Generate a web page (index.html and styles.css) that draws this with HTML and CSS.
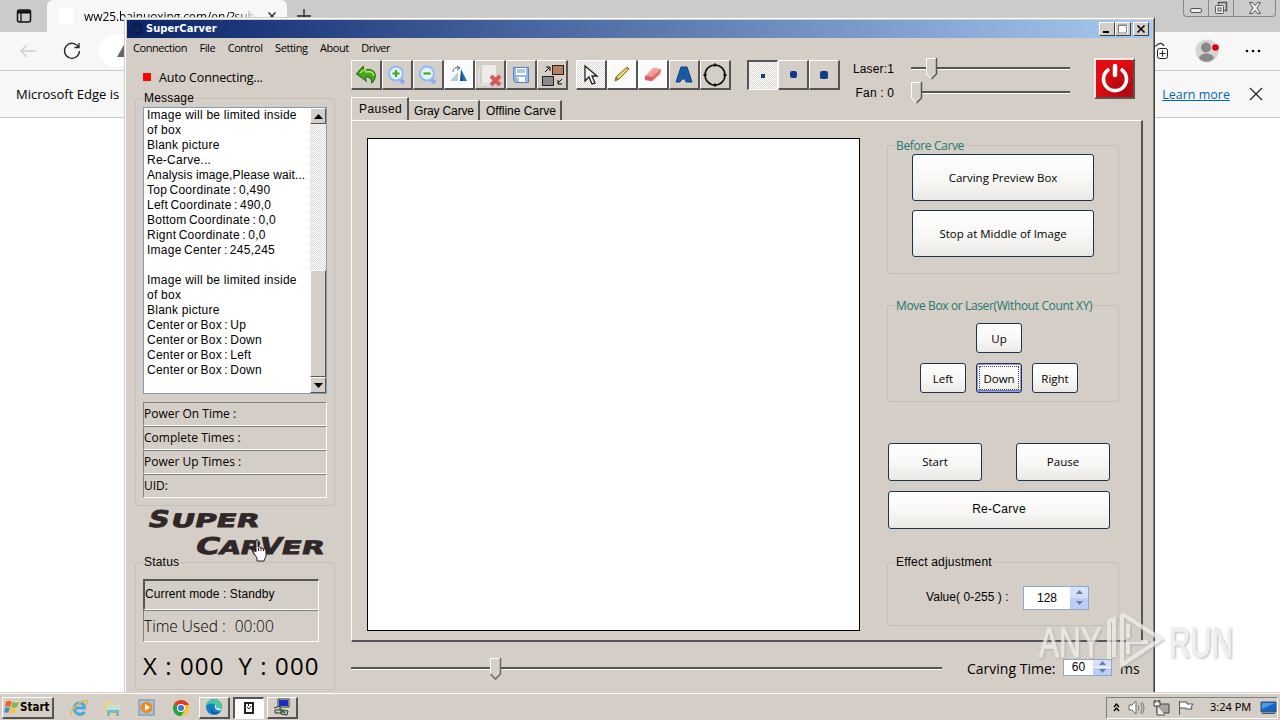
FILE: index.html
```html
<!DOCTYPE html>
<html lang="en">
<head>
    <meta charset="UTF-8">
    <title>SuperCarver</title>
    <link rel="stylesheet" href="styles.css">
</head>
<body>
    <div class="browser">
        <div class="tab-strip">
            <svg class="tab-menu" width="16" height="16" viewBox="0 0 16 16"><rect x="1.5" y="2" width="13" height="12" rx="2" fill="none" stroke="#111" stroke-width="1.5"/><path d="M2 4h12" stroke="#111" stroke-width="3"/><path d="M5 4v10" stroke="#111" stroke-width="1.3"/></svg>
            <div class="browser-tab">
                <span class="favicon"></span>
                <span class="tab-title">ww25.bainuoxing.com/en/?subid</span>
                <svg width="10" height="10" viewBox="0 0 10 10"><path d="M1.5 1.5l7 7m0-7l-7 7" stroke="#222" stroke-width="1.4"/></svg>
            </div>
            <svg class="new-tab" width="16" height="16" viewBox="0 0 16 16"><path d="M8 1v14M1 8h14" stroke="#222" stroke-width="1.3"/></svg>
            <div class="browser-controls">
                <span><svg width="14" height="14" viewBox="0 0 14 14"><rect x="1.5" y="7.5" width="11" height="4" rx="1.5" fill="#eee" stroke="#555"/></svg></span>
                <span><svg width="14" height="14" viewBox="0 0 14 14"><path d="M4.500 3.500v-2h8v8h-2" fill="none" stroke="#555" stroke-width="1.500"/><rect x="1.500" y="4.500" width="8" height="8" rx="1" fill="#eee" stroke="#555"/><rect x="4" y="7" width="3" height="3" fill="none" stroke="#555"/></svg></span>
                <span class="close"><svg width="14" height="12" viewBox="0 0 14 12"><path d="M1.500.5h3L7 3.500 9.500.5h3L9 6l3.500 5.500h-3L7 8.500l-2.500 3h-3L5 6z" fill="#eee" stroke="#555"/></svg></span>
            </div>
        </div>
        <div class="browser-toolbar">
            <svg width="18" height="16" viewBox="0 0 18 16"><path d="M17 8H2m6-6L2 8l6 6" fill="none" stroke="#d0d0d0" stroke-width="1.3"/></svg>
            <svg width="18" height="18" viewBox="0 0 18 18"><path d="M15.500 5A7.500 7.500 0 1 0 16.500 9M16 1v4.500h-4.500" fill="none" stroke="#222" stroke-width="1.300"/></svg>
            <div class="address"><svg width="18" height="16" viewBox="0 0 18 16"><path d="M9 1l8 14H1z" fill="#666"/></svg></div>
            <svg width="18" height="18" viewBox="0 0 18 18"><path d="M1 4h4c3-4 7-3 8 0M1 13h3" fill="none" stroke="#222" stroke-width="1.200"/><rect x="6.500" y="6.500" width="10" height="10" rx="2" fill="#f7f7f7" stroke="#222"/><path d="M11.500 8.500v6m-3-3h6" stroke="#222"/></svg>
            <svg class="avatar" width="24" height="24" viewBox="0 0 24 24"><circle cx="12" cy="12" r="11.500" fill="#d5d5d5"/><circle cx="11" cy="8.500" r="5" fill="#888"/><path d="M4 19c1-6 14-6 15 0-4 5-11 5-15 0z" fill="#888"/><circle cx="20.500" cy="8.500" r="3.300" fill="#d9001b"/></svg>
            <svg width="16" height="4" viewBox="0 0 16 4"><circle cx="2" cy="2" r="1.300"/><circle cx="8" cy="2" r="1.300"/><circle cx="14" cy="2" r="1.300"/></svg>
        </div>
        <div class="infobar">
            <span class="info-text">Microsoft Edge is</span>
            <span class="learn-more">Learn more</span>
            <svg width="14" height="14" viewBox="0 0 14 14"><path d="M1 1l12 12m0-12L1 13" stroke="#222" stroke-width="1.200"/></svg>
        </div>
    </div>

    <div class="window">
        <div class="title-bar">
            <svg width="9" height="12" viewBox="0 0 9 12"><rect x=".5" y=".5" width="8" height="11" fill="#151b3c"/><path d="M2 3h5v6H2z" fill="#0d2560"/></svg>
            <span class="title">SuperCarver</span>
            <div class="controls">
                <button><svg width="12" height="10" viewBox="0 0 12 10"><path d="M2 7h6v2H2z"/></svg></button>
                <button><svg width="12" height="10" viewBox="0 0 12 10"><path d="M2 1h9v9H2z" fill="#fff"/><path d="M1.500 1h8v8h-8zM1 1.500h9" fill="none" stroke="#808080"/></svg></button>
                <button class="close"><svg width="12" height="10" viewBox="0 0 12 10"><path d="M2.500 1.500l7 7m0-7l-7 7" stroke="#000" stroke-width="1.600"/></svg></button>
            </div>
        </div>
        <div class="menu-bar">
            <span>Connection</span>
            <span>File</span>
            <span>Control</span>
            <span>Setting</span>
            <span>About</span>
            <span>Driver</span>
        </div>

        <div class="content">
            <div class="sidebar">
                <div class="connecting"><i></i><span>Auto Connecting...</span></div>
                <fieldset class="message">
                    <legend>Message</legend>
                    <div class="log">
<pre class="log-text">Image will be limited inside
of box
Blank picture
Re-Carve...
<span class="analysis">Analysis image,Please wait...</span>
<span class="pair">Top Coordinate : 0,490
Left Coordinate : 490,0
Bottom Coordinate : 0,0
Rignt Coordinate : 0,0
Image Center : 245,245</span>

Image will be limited inside
of box
Blank picture
<span class="pair">Center or Box : Up
Center or Box : Down
Center or Box : Left
Center or Box : Down</span></pre>
                        <div class="scrollbar">
                            <span class="scroll-btn"><svg width="9" height="5" viewBox="0 0 9 5"><path d="M0 5l4.500-5L9 5z"/></svg></span>
                            <span class="scroll-thumb"></span>
                            <span class="scroll-btn"><svg width="9" height="5" viewBox="0 0 9 5"><path d="M0 0l4.500 5L9 0z"/></svg></span>
                        </div>
                    </div>
                    <div class="info-rows">
                        <div><span>Power On Time :</span></div>
                        <div><span>Complete Times :</span></div>
                        <div><span>Power Up Times :</span></div>
                        <div><span>UID:</span></div>
                    </div>
                </fieldset>
                <svg class="logo" width="200" height="49" viewBox="0 0 200 49">
                    <g transform="skewX(-14)" fill="#302729" stroke="#302729" stroke-width=".8">
                        <text x="17" y="21" font-size="23" textLength="21" lengthAdjust="spacingAndGlyphs">S</text>
                        <text x="40" y="21" font-size="18.500" textLength="88" lengthAdjust="spacingAndGlyphs">UPER</text>
                        <text x="71" y="48" font-size="23" textLength="24" lengthAdjust="spacingAndGlyphs">C</text>
                        <text x="95" y="48" font-size="18.500" textLength="42" lengthAdjust="spacingAndGlyphs">AR</text>
                        <text x="135" y="48" font-size="23" textLength="22" lengthAdjust="spacingAndGlyphs">V</text>
                        <text x="157" y="48" font-size="18.500" textLength="43" lengthAdjust="spacingAndGlyphs">ER</text>
                    </g>
                </svg>
                <fieldset class="status">
                    <legend>Status</legend>
                    <div class="mode">Current mode : Standby</div>
                    <div class="time-used"><span>Time Used :</span><span>00:00</span></div>
                    <div class="coords"><span>X : 000</span><span>Y : 000</span></div>
                </fieldset>
            </div>

            <div class="main">
                <div class="toolbar">
                    <div class="tools">
                        <button><svg width="22" height="22" viewBox="0 0 22 22"><path d="M2 8l8-6v4c7-1 11 3 10 8-1 3-3 5-5 6 1-4-1-7-5-7v4z" fill="#48a51c" stroke="#1f6b12" transform="rotate(-12 11 11)"/><path d="M5 9l5-4 1 3c4-1 7 0 8 4" fill="none" stroke="#b4e361" stroke-width="1.6"/></svg></button>
                        <button><svg width="20" height="20" viewBox="0 0 20 20"><path d="M12 13l5 5" stroke="#8dacf0" stroke-width="4"/><circle cx="9" cy="8.500" r="7" fill="#e1f2ff" stroke="#91bafa" stroke-width="2"/><path d="M9 5v7M5.500 8.500h7" stroke="#4da512" stroke-width="2.200"/></svg></button>
                        <button><svg width="20" height="20" viewBox="0 0 20 20"><path d="M12 13l5 5" stroke="#8dacf0" stroke-width="4"/><circle cx="9" cy="8.500" r="7" fill="#e1f2ff" stroke="#91bafa" stroke-width="2"/><path d="M5.500 8.500h7" stroke="#4da512" stroke-width="2.200"/></svg></button>
                        <button class="white"><svg width="20" height="20" viewBox="0 0 20 20"><path d="M9 7v9H1z" fill="#b9cdd2"/><path d="M12 4v12h6z" fill="#187ab9"/><path d="M12 4l-1 12h3z" fill="#194982"/><path d="M4 7c0-4 3-5 6-4M8 1l3 2-3 2" fill="none" stroke="#386393"/></svg></button>
                        <button><svg width="26" height="24" viewBox="0 0 26 24"><path d="M5 2h14v18c-5 2-10-1-14 1z" fill="#ececec"/><path d="M2 5v17h14" fill="none" stroke="#dedede" stroke-width="2"/><path d="M14 13l9 9m0-9l-9 9" stroke="#d95758" stroke-width="4"/></svg></button>
                        <button><svg width="18" height="18" viewBox="0 0 18 18"><path d="M1.500 1.500h15v15h-13l-2-2z" fill="#92b9e5" stroke="#5585c4"/><path d="M4 2h10v7H4zM5 11h8v5H5z" fill="#fff"/><path d="M5 4h8M5 6h8M6 12v4" stroke="#668db9"/></svg></button>
                        <button><svg width="24" height="24" viewBox="0 0 24 24"><rect x="12.500" y="2.500" width="11" height="9" fill="#b5825d" stroke="#222"/><rect x="2.500" y="13.500" width="11" height="9" fill="#8b8b8b" stroke="#222"/><path d="M5 9l4-4M6 4h4v4M22 16l-4 4m4 1h-4v-4" fill="none" stroke="#000"/></svg></button>
                    </div>
                    <div class="tools">
                        <button class="pattern"><svg width="18" height="22" viewBox="0 0 18 22"><path d="M3 2v15l4-4 3 7 3-1-3-7h5z" fill="#f8f8f8" stroke="#222" stroke-width="1.300"/></svg></button>
                        <button class="white"><svg width="18" height="18" viewBox="0 0 18 18"><path d="M2 15l1-4L14 1l2 2L6 13z" fill="#eed65e" stroke="#766420"/><path d="M2 15l4-2-3-2z" fill="#8b7b53"/><path d="M13 2l2 2" stroke="#e39474" stroke-width="2"/></svg></button>
                        <button class="white"><svg width="20" height="18" viewBox="0 0 20 18"><path d="M2 10L10 2l8 1-1 5-8 7-7-1z" fill="#f68d8c"/><path d="M2 10l7 1v4l-7-1z" fill="#dd5c64"/><path d="M9 11l9-8-1 5-8 7z" fill="#e46d70"/><path d="M4 9l8-6m-5 7l8-6" stroke="#ffc5bf"/></svg></button>
                        <button><svg width="20" height="18" viewBox="0 0 20 18"><path d="M7 1h6l5 15h-6l-1-3H8l-2 3H2zM10 6l-1 4h2z" fill="#1a5bab" stroke="#16437c" fill-rule="evenodd"/></svg></button>
                        <button><svg width="26" height="26" viewBox="0 0 26 26"><circle cx="13" cy="13" r="10" fill="none" stroke="#111" stroke-width="1.600"/><path d="M13 1.500v3m0 17v3M1.500 13h3m17 0h3" stroke="#111" stroke-width="2"/></svg></button>
                    </div>
                    <div class="tools sizes">
                        <button class="pressed"><i class="dot small"></i></button>
                        <button><i class="dot medium"></i></button>
                        <button><i class="dot large"></i></button>
                    </div>
                    <div class="levels">
                        <span>Laser:1</span>
                        <div class="slider"><svg class="laser-thumb" width="12" height="22" viewBox="0 0 12 22"><path d="M.5.500h10V16l-5 5-5-5z" fill="#d6cfc7" stroke="#fff"/><path d="M10.500 0v16l-5 5" fill="none" stroke="#555" stroke-width="1.500"/></svg></div>
                        <span>Fan : 0</span>
                        <div class="slider"><svg width="12" height="22" viewBox="0 0 12 22"><path d="M.5.500h10V16l-5 5-5-5z" fill="#d6cfc7" stroke="#fff"/><path d="M10.500 0v16l-5 5" fill="none" stroke="#555" stroke-width="1.500"/></svg></div>
                    </div>
                    <button class="power"><svg width="30" height="32" viewBox="0 0 30 32"><path d="M8 7a11.500 11.500 0 1 0 14 0" fill="none" stroke="#fff" stroke-width="3.600" stroke-linecap="round"/><path d="M15 3v9" stroke="#fff" stroke-width="4.500" stroke-linecap="round"/></svg></button>
                </div>

                <div class="tabs">
                    <div class="tab active"><span>Paused</span></div>
                    <div class="tab gray"><span>Gray Carve</span></div>
                    <div class="tab offline"><span>Offline Carve</span></div>
                </div>
                <div class="panel">
                    <div class="canvas"></div>
                    <div class="actions">
                        <fieldset class="before">
                            <legend>Before Carve</legend>
                            <button class="btn">Carving Preview Box</button>
                            <button class="btn middle">Stop at Middle of Image</button>
                        </fieldset>
                        <fieldset class="move">
                            <legend>Move Box or Laser(Without Count XY)</legend>
                            <div class="pad">
                                <button class="btn up">Up</button>
                                <button class="btn left">Left</button>
                                <button class="btn focused">Down</button>
                                <button class="btn">Right</button>
                            </div>
                        </fieldset>
                        <div class="run">
                            <button class="btn">Start</button>
                            <button class="btn">Pause</button>
                            <button class="btn wide">Re-Carve</button>
                        </div>
                        <fieldset class="effect">
                            <legend>Effect adjustment</legend>
                            <div class="value">
                                <span>Value( 0-255 ) :</span>
                                <div class="spinner">
                                    <span>128</span>
                                    <div class="arrows"><svg width="7" height="4" viewBox="0 0 7 4"><path d="M0 4l3.500-4L7 4z"/></svg><svg width="7" height="4" viewBox="0 0 7 4"><path d="M0 0l3.500 4L7 0z"/></svg></div>
                                </div>
                            </div>
                        </fieldset>
                    </div>
                </div>

                <div class="bottom">
                    <div class="slider time-slider"><svg width="12" height="22" viewBox="0 0 12 22"><path d="M.5.500h10V16l-5 5-5-5z" fill="#d6cfc7" stroke="#fff"/><path d="M10.500 0v16l-5 5-5-5" fill="none" stroke="#666" stroke-width="1.500"/></svg></div>
                    <span class="carving-time">Carving Time:</span>
                    <div class="spinner small">
                        <span>60</span>
                        <div class="arrows"><svg width="7" height="4" viewBox="0 0 7 4"><path d="M0 4l3.500-4L7 4z"/></svg><svg width="7" height="4" viewBox="0 0 7 4"><path d="M0 0l3.500 4L7 0z"/></svg></div>
                    </div>
                    <span class="ms">ms</span>
                </div>
            </div>
        </div>
    </div>

    <div class="watermark">
        <svg width="200" height="60" viewBox="0 0 200 60">
            <text x="3" y="48" textLength="62" lengthAdjust="spacingAndGlyphs">ANY</text>
            <path d="M73 50V12l5-2v38M86 5l39 25-39 26V5m6 10v14m0 16V33l20 0" fill="none" stroke="#eeecea" stroke-width="4"/>
            <text x="133" y="48" textLength="64" lengthAdjust="spacingAndGlyphs">RUN</text>
        </svg>
    </div>

    <div class="taskbar">
        <button class="start"><svg width="16" height="16" viewBox="0 0 16 16"><path d="M2 3c2-2 4-1 6 0L6 8C4 7 3 7 1 8z" fill="#ed622c"/><path d="M9 3c2 1 4 1 6 0l-2 5c-2 1-4 1-6 0z" fill="#85b839"/><path d="M1 9c2-1 4-1 5 0l-2 5c-1-1-3-1-4 0z" fill="#448bd1"/><path d="M7 9c2 1 3 1 5 0l-2 5c-1 1-3 1-5 0z" fill="#f6c333"/></svg><span>Start</span></button>
        <div class="quick">
            <svg width="18" height="18" viewBox="0 0 18 18"><path d="M14.500 13c-4 5-11 1-10-5 2-6 10-5 10 1h-9" fill="none" stroke="#48a9df" stroke-width="3"/><path d="M2 16C-2 12 13-1 17 2c1 1 0 2-1 4" fill="none" stroke="#e5b941" stroke-width="1.500"/></svg>
            <svg width="18" height="18" viewBox="0 0 18 18"><path d="M1 3h6l1 2h8v12H1z" fill="#f2d478"/><path d="M3 6h13v5H3z" fill="#bae3df"/><path d="M3 17v-6h12v6h-3v-3H6v3z" fill="#70b9dc"/></svg>
            <svg width="18" height="18" viewBox="0 0 18 18"><rect x="1" y="1" width="15" height="15" fill="#a4c9e8" stroke="#5e8eb8"/><circle cx="8.500" cy="8.500" r="6" fill="#f18a1c"/><path d="M7 5l5 3.500L7 12z" fill="#fff"/></svg>
            <svg width="18" height="18" viewBox="0 0 18 18"><circle cx="9" cy="9" r="8" fill="#fbc51c"/><path d="M9 9L2 5c4-6 12-5 15 1H9z" fill="#e3392f"/><path d="M9 9L2 5c-3 6 1 12 7 12l4-6z" fill="#27a24b"/><circle cx="9" cy="9" r="4" fill="#fff"/><circle cx="9" cy="9" r="3" fill="#3878dc"/></svg>
        </div>
        <div class="running">
            <button><svg width="18" height="18" viewBox="0 0 18 18"><circle cx="9" cy="9" r="8" fill="#167fc8"/><path d="M1 8C2-1 16-1 17 8c0 4-5 4-6 2 1-5-7-6-10-2z" fill="#4bc8a0"/><path d="M7 8c-2 5 3 8 8 6-5 5-12 0-8-6z" fill="#0c4fa0"/><path d="M10 7c2 0 1 3 1 3l6 1c-3 3-8 1-7-4z" fill="#e9f4f8"/></svg></button>
            <button class="current"><svg width="12" height="14" viewBox="0 0 12 14"><path d="M1 1h10v12H1z" fill="#222"/><path d="M3 3h2v2h1V3h3v8H3z" fill="#fff"/><path d="M4 6l2 2 2-3" fill="none" stroke="#222"/></svg></button>
            <button><svg width="18" height="18" viewBox="0 0 18 18"><path d="M5 1h11v8H5z" fill="#ddd" stroke="#333"/><path d="M6 2h9v6H6z" fill="#1730c4"/><path d="M1 10l6-2v4H2v3h6v-3m1 0l6 1-1 4-6-1z" fill="#ccc" stroke="#333"/><path d="M7 11l5 4" stroke="#238225" stroke-width="2"/></svg></button>
        </div>
        <div class="tray">
            <svg width="7" height="10" viewBox="0 0 7 10"><path d="M1 4l2.500-3L6 4M1 8l2.500-3L6 8" fill="none" stroke="#000" stroke-width="1.300"/></svg>
            <svg width="17" height="16" viewBox="0 0 17 16"><path d="M1 5h3l4-4v13l-4-4H1z" fill="#fff" stroke="#666"/><path d="M10 5q2 3 0 6m2-8q4 5 0 10m2-11q4 6 0 12" fill="none" stroke="#777"/></svg>
            <svg width="17" height="16" viewBox="0 0 17 16"><path d="M4 4h12v9H4z" fill="#a7a5a1" stroke="#444"/><path d="M1 1h6v5H1zM4 6v9h8M2 0v3m4-3v3" fill="#eee" stroke="#444"/></svg>
            <svg width="17" height="16" viewBox="0 0 17 16"><path d="M1.500 1v14M2 2h7v2h6l-2 3 1 2H8V8H2" fill="#fff" stroke="#555"/></svg>
            <span class="clock">3:24 PM</span>
            <svg class="desktop" width="17" height="14" viewBox="0 0 17 14"><path d="M1 1h15v10H1z" fill="#1765c1" stroke="#36557c"/><path d="M2 2h13L2 8z" fill="#4c9be4"/><path d="M2 12.500h13" stroke="#555"/></svg>
        </div>
    </div>

    <svg class="cursor" width="16" height="23" viewBox="0 0 16 23"><path d="M4 1q2-1 2 1v6q2-1 2.500 1 2-1 2.500 1 3-1 3 2v5l-2 5H5v-3L1 13q0-2 2-1l1 1z" fill="#fff" stroke="#222"/><path d="M6.500 9v3m2.500-3v3m2.500-2v2" stroke="#222"/></svg>
</body>
</html>
```
FILE: styles.css
```css
* {
    box-sizing: border-box;
}

body {
    margin: 0;
    width: 1280px;
    height: 720px;
    overflow: hidden;
    position: relative;
    background: #fff;
    color: #000;
    font: 12px/15px "Open Sans", "Noto Sans", sans-serif;
}

button {
    padding: 0;
    margin: 0;
    font: inherit;
    color: inherit;
    border-radius: 0;
}

svg {
    display: block;
    flex: none;
}

span, legend, .btn, .mode {
    white-space: nowrap;
}

/* browser behind the window */
.tab-strip {
    display: flex;
    align-items: flex-end;
    height: 32px;
    background: #cbcbcb;
}

.tab-menu {
    margin: 0 15px 8px 16px;
}

.browser-tab {
    display: flex;
    align-items: center;
    width: 240px;
    height: 32px;
    padding-left: 11px;
    background: #f7f7f7;
    border-radius: 6px 6px 0 0;
}

.favicon {
    width: 16px;
    height: 16px;
    background: #fff;
}

.tab-title {
    width: 172px;
    margin: 0 11px 0 10px;
    overflow: hidden;
    letter-spacing: -0.1px;
    mask-image: linear-gradient(90deg, #000 88%, transparent);
}

.new-tab {
    margin: 0 0 8px 9px;
}

.browser-controls {
    display: flex;
    align-self: flex-start;
    height: 17px;
    margin: 0 4px 0 auto;
    border: 1px solid #888;
    border-top: 0;
    border-radius: 0 0 4px 4px;
}

.browser-controls span {
    display: flex;
    align-items: center;
    justify-content: center;
    width: 25px;
    border-right: 1px solid #888;
}

.browser-controls .close {
    width: 41px;
    border: 0;
}

.browser-toolbar {
    display: flex;
    align-items: center;
    height: 39px;
    padding-left: 19px;
    background: #f7f7f7;
    border-bottom: 1px solid #c8c8c8;
}

.browser-toolbar > svg + svg {
    margin-left: 26px;
}

.address {
    width: 1039px;
    height: 32px;
    flex: none;
    margin: 0 13px 0 18px;
    padding: 7px 17px;
    border-radius: 16px;
    background: #fff;
}

.infobar {
    display: flex;
    align-items: center;
    height: 47px;
    padding: 0 17px 0 16px;
    background: #f7f7f7;
    border-bottom: 1px solid #c8c8c8;
}

.info-text {
    font-size: 13px;
}

.learn-more {
    margin: 0 19px 0 auto;
    color: #0067b8;
    text-decoration: underline;
    font-size: 12.5px;
}

/* application window */
.window {
    position: absolute;
    left: 124px;
    top: 17px;
    width: 1031px;
    height: 676px;
    padding: 2px;
    background: #d5cec6;
    border: 1px solid #d4d0c8;
    border-right-color: #404040;
    box-shadow: inset 1px 1px #fff, inset -1px 0 #808080;
}

.title-bar {
    display: flex;
    align-items: center;
    height: 18px;
    padding: 0 3px 0 6px;
    color: #fff;
    background: linear-gradient(90deg, #0a246a, #a6caf0);
}

.title {
    margin-left: 4px;
    font: bold 11px/18px "DejaVu Sans Condensed", "DejaVu Sans", sans-serif;
    letter-spacing: 0.1px;
}

.controls {
    display: flex;
    margin-left: auto;
}

.controls button {
    width: 16px;
    height: 14px;
    padding: 1px;
    border: 1px solid #fff;
    border-right-color: #404040;
    border-bottom-color: #404040;
    background: #d5cec6;
}

.controls .close {
    margin-left: 2px;
}

.menu-bar {
    display: flex;
    gap: 12.5px;
    height: 20px;
    padding: 3px 6px;
    font-size: 11px;
    line-height: 14px;
    letter-spacing: -0.45px;
}

.content {
    display: flex;
    gap: 16px;
    padding-left: 8px;
}

.sidebar {
    width: 200px;
}

.connecting {
    display: flex;
    align-items: center;
    gap: 8px;
    height: 33px;
    padding: 5px 0 0 8px;
    font-size: 12.5px;
    letter-spacing: -0.15px;
}

.connecting i {
    width: 8px;
    height: 8px;
    background: #f00;
}

fieldset {
    min-width: 0;
    margin: 0;
    padding: 0 7px;
    border: 1px solid #c4bdb9;
    border-radius: 3px;
}

legend {
    height: 15px;
    padding: 0 1px;
    line-height: 15px;
}

.message {
    height: 415px;
    padding-top: 1px;
}

.message legend,
.status legend,
.effect legend {
    font-family: "Liberation Sans", Arial, sans-serif;
    letter-spacing: 0.2px;
}

.log {
    display: flex;
    width: 184px;
    height: 287px;
    border: 1px solid #7f9db9;
    background: #fff;
}

.log-text {
    flex: 1;
    width: 0;
    margin: 0;
    padding-left: 3px;
    font: 12px/15px "Liberation Sans", Arial, sans-serif;
    letter-spacing: 0.25px;
}

.log-text span {
    white-space: pre;
}

.pair {
    word-spacing: -1.2px;
}

.analysis {
    letter-spacing: 0.1px;
}

.scrollbar {
    display: flex;
    flex-direction: column;
    width: 16px;
    background: repeating-conic-gradient(#fff 0 25%, #dcd7d2 0 50%) 0 0 / 2px 2px;
}

.scroll-btn {
    display: flex;
    align-items: center;
    justify-content: center;
    height: 16px;
    background: #d5cec6;
    border: 1px solid #fff;
    border-right-color: #555;
    border-bottom-color: #555;
}

.scroll-thumb {
    height: 107px;
    margin-top: auto;
    background: #d5cec6;
    border: 1px solid #fff;
    border-right-color: #555;
    border-bottom-color: #555;
}

.info-rows {
    width: 184px;
    margin-top: 8px;
}

.info-rows div {
    height: 24px;
    padding-top: 3px;
    border: 1px solid #808080;
    border-right-color: #fff;
    border-bottom-color: #fff;
}

.logo {
    font-family: "DejaVu Sans", sans-serif;
    font-weight: bold;
}

.status {
    height: 135px;
    padding-top: 9px;
}

.mode {
    width: 176px;
    height: 31px;
    border: 1px solid #fff;
    border-top: 2px solid #555;
    border-left: 2px solid #555;
    font: 12px/27px "Liberation Sans", Arial, sans-serif;
    letter-spacing: 0.1px;
}

.time-used {
    display: flex;
    gap: 9px;
    width: 176px;
    height: 32px;
    border: 1px solid #808080;
    border-right-color: #fff;
    border-bottom-color: #fff;
    font-size: 15.5px;
    font-weight: 300;
    line-height: 30px;
}

.coords {
    display: flex;
    gap: 14px;
    margin-top: 8px;
    font-size: 24px;
    line-height: 32px;
    letter-spacing: 1.1px;
}

.main {
    width: 792px;
}

.toolbar {
    display: flex;
    align-items: flex-start;
    height: 40px;
}

.tools {
    display: flex;
    margin: 2px 8px 0 0;
}

.tools button {
    display: flex;
    align-items: center;
    justify-content: center;
    width: 31px;
    height: 30px;
    background: #d5cec6;
    border: 1px solid #fff;
    border-right: 2px solid #555;
    border-bottom: 2px solid #555;
}

.tools .white {
    background: #fbfbfb;
}

.tools .pattern,
.tools .pressed {
    background: repeating-conic-gradient(#fff 0 25%, #dcd7d2 0 50%) 0 0 / 2px 2px;
}

.tools .pressed {
    border: 1px solid #fff;
    border-top: 2px solid #555;
    border-left: 2px solid #555;
}

.sizes {
    margin: 2px 12px 0 8px;
}

.dot {
    border-radius: 2px;
    background: #113d87;
}

.dot.small {
    width: 4px;
    height: 4px;
    border-radius: 0;
}

.dot.medium {
    width: 7px;
    height: 7px;
}

.dot.large {
    width: 8px;
    height: 8px;
}

.levels {
    display: grid;
    grid-template-columns: 59px 159px;
    grid-template-rows: 24px 24px;
    align-items: center;
    margin-top: -1px;
    font: 12px/15px "Liberation Sans", Arial, sans-serif;
}

.levels span {
    width: 42px;
    margin-top: 1px;
    text-align: right;
    letter-spacing: 0.15px;
}

.slider {
    display: flex;
    align-items: center;
    height: 22px;
    background: linear-gradient(#555 0 2px, #fff 2px 3px) 0 9px / 100% 3px no-repeat;
}

.laser-thumb {
    margin-left: 15px;
}

.power {
    display: flex;
    align-items: center;
    justify-content: center;
    width: 41px;
    height: 41px;
    margin-left: 24px;
    background: radial-gradient(circle at 75% 80%, #ad080c, #e40b12 70%);
    border: 2px solid #f3eeea;
    border-right-color: #555;
    border-bottom-color: #555;
}

.tabs {
    display: flex;
    align-items: flex-end;
    height: 22px;
    font-family: "Liberation Sans", Arial, sans-serif;
}

.tab {
    height: 20px;
    padding: 3px 0 0 5px;
    border-top: 1px solid #fff;
    border-right: 2px solid #555;
}

.tab.active {
    width: 58px;
    height: 23px;
    padding: 4px 0 0 7px;
    border-left: 1px solid #fff;
    letter-spacing: 0.4px;
}

.tab.gray {
    width: 71px;
    letter-spacing: -0.15px;
}

.tab.offline {
    width: 82px;
    padding-left: 6px;
}

.panel {
    display: flex;
    gap: 27px;
    height: 522px;
    padding: 17px 0 0 15px;
    border: 1px solid #fff;
    border-right: 2px solid #555;
    border-bottom: 2px solid #555;
}

.canvas {
    width: 493px;
    height: 493px;
    flex: none;
    border: 1px solid #000;
    background: #fff;
}

.actions {
    width: 232px;
}

.before,
.move {
    color: #23796c;
}

.before legend,
.move legend {
    letter-spacing: -0.37px;
}

.before {
    height: 136px;
    padding-top: 1px;
}

.btn {
    border: 1px solid #173653;
    border-radius: 3px;
    color: #000;
    background: linear-gradient(#fff, #f7f6f3 60%, #ebe8e3);
    font-size: 11.5px;
}

.before .btn {
    display: block;
    width: 182px;
    height: 47px;
    margin-left: 17px;
}

.before .middle {
    margin-top: 9px;
}

.move {
    height: 104px;
    margin-top: 24px;
    padding-top: 10px;
}

.pad {
    display: grid;
    grid-template-columns: repeat(3, 46px);
    grid-template-rows: 30px 30px;
    gap: 10px;
    margin-left: 25px;
}

.up {
    grid-column: 2;
}

.left {
    grid-column: 1;
}

.focused {
    outline: 1px dotted #444;
    outline-offset: -4px;
    border-color: #24305f;
    box-shadow: inset 0 0 0 1px #93a3dc, inset 0 -2px #687bc4;
}

.run {
    display: grid;
    grid-template-columns: 94px 94px;
    grid-template-rows: 38px 38px;
    gap: 10px 34px;
    margin: 41px 0 26px 1px;
}

.run .btn {
    padding-bottom: 2px;
}

.run .wide {
    grid-column: 1 / 3;
    font: 12px/15px "Liberation Sans", Arial, sans-serif;
    letter-spacing: 0.3px;
}

.effect {
    height: 71px;
    font-family: "Liberation Sans", Arial, sans-serif;
}

.value {
    display: flex;
    align-items: center;
    height: 55px;
    padding: 0 22px 0 31px;
}

.value > span {
    letter-spacing: 0.05px;
}

.spinner {
    display: flex;
    width: 66px;
    height: 24px;
    margin-left: auto;
    border: 1px solid #8ca9c8;
    background: #fff;
    font: 12px/22px "Liberation Sans", Arial, sans-serif;
}

.spinner span {
    flex: 1;
    text-align: center;
}

.arrows {
    display: flex;
    flex-direction: column;
    align-items: center;
    justify-content: space-around;
    width: 18px;
    background: linear-gradient(#d5e1fc 48%, #fff 48% 52%, #bccdf7 52%);
}

.arrows path {
    fill: #697da8;
}

.bottom {
    display: flex;
    align-items: center;
    height: 51px;
    padding-top: 3px;
}

.time-slider {
    width: 591px;
    padding-left: 139px;
}

.carving-time {
    width: 88px;
    margin: -2px 0 0 25px;
    font-size: 14px;
}

.spinner.small {
    width: 49px;
    height: 17px;
    margin: -4px 0 0 8px;
    line-height: 15px;
}

.ms {
    margin: -2px 0 0 8px;
    font-size: 14px;
}

.watermark {
    position: absolute;
    left: 1036px;
    top: 609px;
    opacity: 0.8;
    filter: drop-shadow(1px 1px 1px #aaa);
}

.watermark text {
    font: 42px "Liberation Sans", Arial, sans-serif;
    fill: #eeecea;
    stroke: #eeecea;
}

.taskbar {
    position: absolute;
    left: 0;
    top: 692px;
    width: 1280px;
    height: 28px;
    display: flex;
    align-items: center;
    padding: 2px 2px 0;
    background: #d5cec6;
    border-top: 1px solid #d4d0c8;
    box-shadow: inset 0 1px #fff;
}

.start {
    display: flex;
    align-items: center;
    width: 52px;
    height: 22px;
    padding-left: 1px;
    background: #d5cec6;
    border: 1px solid #fff;
    border-right: 2px solid #555;
    border-bottom: 2px solid #555;
    font: bold 11.5px/18px "DejaVu Sans Condensed", "DejaVu Sans", sans-serif;
}

.quick {
    display: flex;
    gap: 16px;
    margin-left: 16px;
}

.running {
    display: flex;
    gap: 3px;
    margin-left: 9px;
}

.running button {
    display: flex;
    align-items: center;
    justify-content: center;
    width: 31px;
    height: 22px;
    background: #d5cec6;
    border: 1px solid #fff;
    border-right: 2px solid #555;
    border-bottom: 2px solid #555;
}

.running .current {
    background: #fff;
    border: 1px solid #fff;
    border-top: 2px solid #555;
    border-left: 2px solid #555;
}

.tray {
    display: flex;
    align-items: center;
    gap: 8px;
    width: 172px;
    height: 22px;
    margin-left: auto;
    padding-left: 6px;
    border: 1px solid #808080;
    border-right-color: #fff;
    border-bottom-color: #fff;
    font: 11px/18px "Noto Sans", sans-serif;
}

.clock {
    margin: -2px 0 0 7px;
}

.desktop {
    margin-left: auto;
}

.cursor {
    position: absolute;
    left: 252px;
    top: 539px;
}
```
